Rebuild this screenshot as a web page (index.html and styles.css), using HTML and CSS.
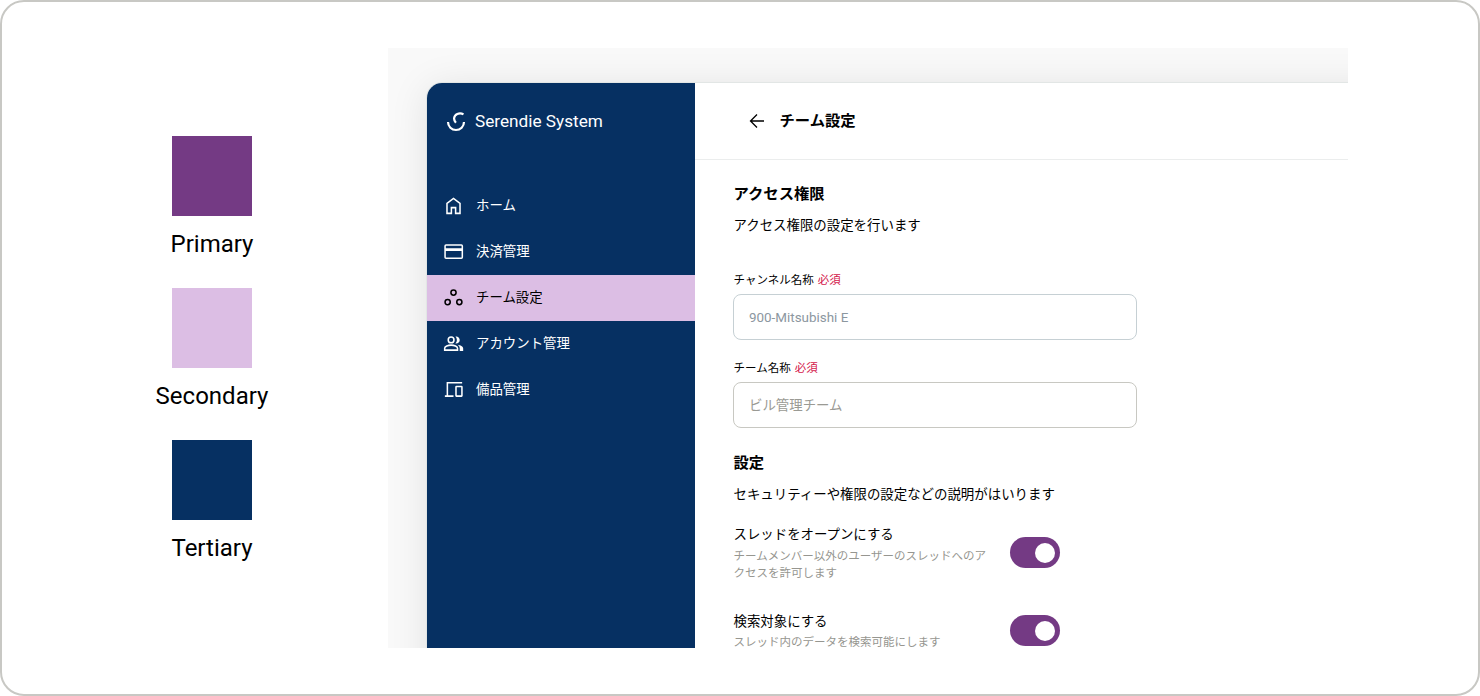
FILE: index.html
```html
<!DOCTYPE html>
<html lang="ja">
<head>
<meta charset="utf-8">
<title>Serendie System</title>
<link rel="stylesheet" href="styles.css">
</head>
<body>
<main class="frame">
  <section class="palette">
    <div class="swatch"><div class="chip chip-primary"></div><p class="chip-name">Primary</p></div>
    <div class="swatch"><div class="chip chip-secondary"></div><p class="chip-name">Secondary</p></div>
    <div class="swatch"><div class="chip chip-tertiary"></div><p class="chip-name">Tertiary</p></div>
  </section>
  <section class="preview">
    <div class="app">
      <aside class="sidebar">
        <div class="brand">
          <svg class="logo" viewBox="0 0 20 20"><path d="M2 10a8 8 0 0 0 16 0M17.500 2.400C15.500 1.200 13.300 1.100 11.300 2 7.600 3.600 7.100 7.700 9.900 10.800"/></svg>
          <span>Serendie System</span>
        </div>
        <nav class="nav">
          <a class="item"><svg class="icon" viewBox="0 0 24 24"><path d="M5.200 20.200V9.800L12 4.600l6.800 5.200v10.400h-4.600v-6H9.800v6z"/></svg><span>ホーム</span></a>
          <a class="item"><svg class="icon" viewBox="0 0 24 24"><rect x="3.200" y="5.300" width="18" height="13.800" rx="1"/><path d="M3.200 10h18" stroke-width="2.800"/></svg><span>決済管理</span></a>
          <a class="item active"><svg class="icon" viewBox="0 0 24 24"><circle cx="12" cy="6.900" r="2.700"/><circle cx="5.900" cy="16.800" r="2.700"/><circle cx="18.100" cy="16.800" r="2.700"/></svg><span>チーム設定</span></a>
          <a class="item"><svg class="icon" viewBox="0 0 24 24"><circle cx="9.500" cy="8.300" r="3"/><path d="M2.800 18.900v-1.900c0-2 3.500-3.300 6.700-3.300s6.700 1.300 6.700 3.300v1.900z"/><path class="solid" d="M14 11.900c1.100-1.200 1.500-2.300 1.500-3.600S15.100 5.800 14 4.700c2.300-.5 4.500 1.300 4.500 3.600s-2.200 4.100-4.500 3.600zM18.500 19.700v-2.600c0-1.700-.8-3-2.200-3.900 2.900.4 5.800 1.700 5.800 3.900v2.600z"/></svg><span>アカウント管理</span></a>
          <a class="item"><svg class="icon" viewBox="0 0 24 24"><path d="M21 5H5.600v13.100M3 18.900h9"/><rect x="14.600" y="8.900" width="6.200" height="10" rx=".4"/></svg><span>備品管理</span></a>
        </nav>
      </aside>
      <div class="page">
        <header class="topbar">
          <svg class="back" viewBox="0 0 16 16"><path d="M15 8H1.800M8 1.500L1.500 8 8 14.500"/></svg>
          <h1 class="title">チーム設定</h1>
        </header>
        <div class="content">
          <h2 class="title">アクセス権限</h2>
          <p class="lead">アクセス権限の設定を行います</p>
          <div class="field field-channel">
            <div class="label">チャンネル名称<span class="required">必須</span></div>
            <div class="input input-channel">900-Mitsubishi E</div>
          </div>
          <div class="field">
            <div class="label">チーム名称<span class="required">必須</span></div>
            <div class="input input-team">ビル管理チーム</div>
          </div>
          <h2 class="title">設定</h2>
          <p class="lead">セキュリティーや権限の設定などの説明がはいります</p>
          <div class="options">
            <div class="option">
              <div class="option-text"><p class="option-name">スレッドをオープンにする</p><p class="note">チームメンバー以外のユーザーのスレッドへのア<br>クセスを許可します</p></div>
              <div class="toggle"><div class="knob"></div></div>
            </div>
            <div class="option">
              <div class="option-text"><p class="option-name">検索対象にする</p><p class="note">スレッド内のデータを検索可能にします</p></div>
              <div class="toggle"><div class="knob"></div></div>
            </div>
          </div>
        </div>
      </div>
    </div>
  </section>
</main>
</body>
</html>
```
FILE: styles.css
```css
* { box-sizing: border-box; }
body { margin: 0; background: #fff; color: #000; font-family: Roboto, "Noto Sans CJK JP", sans-serif; }
h1, h2, p { margin: 0; }
svg { display: block; flex: none; fill: none; stroke: currentColor; }

.frame { display: flex; width: 1480px; height: 696px; border: 2px solid #c8c8c4; border-radius: 24px; padding-top: 46px; overflow: hidden; }
.palette { width: 386px; flex: none; padding: 88px 34px 0 0; display: flex; flex-direction: column; align-items: center; gap: 24px; }
.swatch { display: flex; flex-direction: column; align-items: center; height: 128px; padding-left: 68px; }
.chip { width: 80px; height: 80px; }
.chip-primary { background: #743a84; }
.chip-secondary { background: #dcbee4; }
.chip-tertiary { background: #063062; }
.chip-name { margin-top: 8px; font-size: 24px; line-height: 40px; }

.preview { width: 960px; height: 600px; flex: none; overflow: hidden; background: #f9f9f9; padding: 35px 0 0 39px; }
.app { display: flex; width: 1100px; height: 700px; border-radius: 15px; overflow: hidden; background: #fff; box-shadow: 0 0 0 1px #e2e6e5, 0 4px 38px rgba(0, 0, 0, .1); }
.sidebar { width: 268px; flex: none; background: #063062; color: #fff; }
.brand { display: flex; align-items: center; gap: 9px; height: 77px; padding: 0 0 2px 19px; font-size: 17.200px; }
.logo { width: 20px; height: 20px; margin-top: 2px; stroke-width: 2.200; }
.nav { padding-top: 22.600px; }
.item { display: flex; align-items: center; height: 46px; padding-left: 14.500px; gap: 11.500px; font-size: 13.420px; line-height: 20px; }
.icon { width: 23px; height: 23px; stroke-width: 1.600; }
.solid { fill: currentColor; stroke: none; }
.active { background: #dcbee4; color: #000; }

.page { flex: 1; }
.topbar { display: flex; align-items: center; gap: 15px; height: 77px; padding: 0 0 1px 53.500px; border-bottom: 1px solid #ebeded; }
.back { width: 16px; height: 16px; stroke-width: 1.300; }
.title { font-size: 15.300px; font-weight: 700; line-height: 24px; }
.content { padding: 22px 0 0 38.500px; }
.lead { margin-top: 9px; font-size: 13.430px; line-height: 22px; }
.field { margin-bottom: 23px; }
.field-channel { margin: 35px 0 20px; }
.label { display: flex; gap: 4px; height: 22px; font-size: 11.500px; line-height: 16px; }
.required { color: #d4184c; }
.input { display: flex; align-items: center; width: 404px; height: 46px; margin-left: -.5px; padding-left: 15px; border: 1px solid #c8c8c2; border-radius: 8px; font-size: 13.420px; }
.input-channel { border-color: #c6d0d4; color: #8c979f; }
.input-team { padding-bottom: 2px; color: #9a9a94; }
.options { display: flex; flex-direction: column; gap: 29px; margin-top: 18px; }
.option { display: flex; align-items: center; width: 326px; justify-content: space-between; }
.option-name { font-size: 13.420px; line-height: 22px; }
.note { margin-top: 1.500px; color: #969690; font-size: 11.500px; line-height: 17px; }
.toggle { display: flex; align-items: center; justify-content: flex-end; width: 50px; height: 31px; padding-right: 5px; border-radius: 16px; background: #743a84; }
.knob { width: 20px; height: 20px; border-radius: 50%; background: #fff; }
```
